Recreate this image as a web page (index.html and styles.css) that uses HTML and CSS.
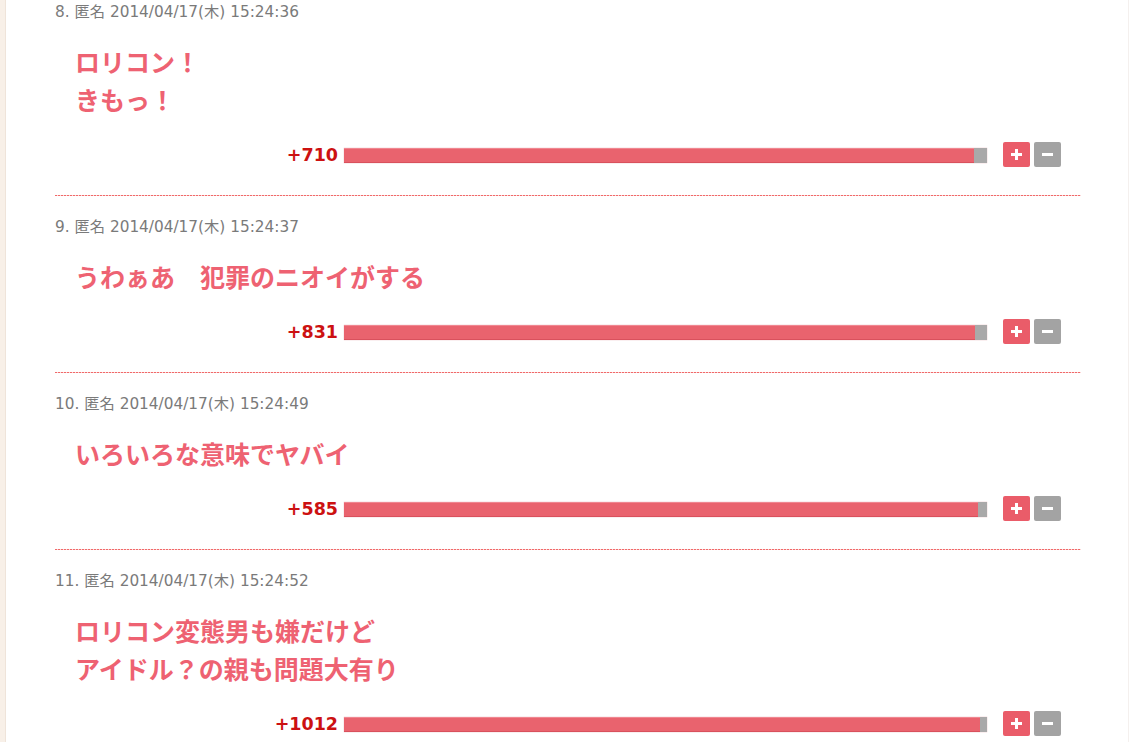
FILE: index.html
```html
<!DOCTYPE html>
<html lang="ja">
<head>
<meta charset="utf-8">
<link rel="stylesheet" href="styles.css">
</head>
<body>
<div class="frame">
  <div class="page">
    <div class="post">
      <div class="meta">8. 匿名 2014/04/17(木) 15:24:36</div>
      <div class="comment">ロリコン！<br>きもっ！</div>
      <div class="vote">
        <span class="score">+710</span>
        <div class="bar"><div class="plus-part" style="width:98%"></div></div>
        <span class="btn btn-plus"></span>
        <span class="btn btn-minus"></span>
      </div>
    </div>
    <div class="post">
      <div class="meta">9. 匿名 2014/04/17(木) 15:24:37</div>
      <div class="comment">うわぁあ　犯罪のニオイがする</div>
      <div class="vote">
        <span class="score">+831</span>
        <div class="bar"><div class="plus-part" style="width:98.1%"></div></div>
        <span class="btn btn-plus"></span>
        <span class="btn btn-minus"></span>
      </div>
    </div>
    <div class="post">
      <div class="meta">10. 匿名 2014/04/17(木) 15:24:49</div>
      <div class="comment">いろいろな意味でヤバイ</div>
      <div class="vote">
        <span class="score">+585</span>
        <div class="bar"><div class="plus-part" style="width:98.6%"></div></div>
        <span class="btn btn-plus"></span>
        <span class="btn btn-minus"></span>
      </div>
    </div>
    <div class="post">
      <div class="meta">11. 匿名 2014/04/17(木) 15:24:52</div>
      <div class="comment">ロリコン変態男も嫌だけど<br>アイドル？の親も問題大有り</div>
      <div class="vote">
        <span class="score">+1012</span>
        <div class="bar"><div class="plus-part" style="width:98.9%"></div></div>
        <span class="btn btn-plus"></span>
        <span class="btn btn-minus"></span>
      </div>
    </div>
  </div>
</div>
</body>
</html>
```

FILE: styles.css
```css
html, body {
  margin: 0;
  padding: 0;
  background: #ffffff;
  font-family: "Noto Sans CJK JP", "DejaVu Sans", sans-serif;
}

.frame {
  border-left: 5px solid #f8f0e8;
  min-height: 742px;
  overflow: hidden;
}

.page {
  border-left: 1px solid #efe4da;
  border-right: 1px solid #f4f0ee;
  margin-right: 1px;
  padding-left: 49px;
  padding-right: 47px;
  min-height: 742px;
}

.post {
  padding-top: 20px;
  padding-bottom: 29px;
  border-bottom: 1px solid transparent;
  background: repeating-linear-gradient(to right, #f06a6a 0px, #f06a6a 2px, #fbd6d6 2px, #fbd6d6 3px) left bottom / 100% 1px no-repeat;
}

.post:first-child {
  padding-top: 2px;
}

.meta {
  font-family: "DejaVu Sans", "Noto Sans CJK JP", sans-serif;
  font-size: 15.3px;
  line-height: 20px;
  color: #7a7a7a;
}

.comment {
  margin-top: 20px;
  padding-left: 20px;
  font-size: 25px;
  line-height: 38px;
  font-weight: bold;
  color: #ee6272;
}

.vote {
  margin-top: 24px;
  display: flex;
  align-items: center;
  height: 25px;
  padding-right: 20px;
}

.score {
  width: 283px;
  text-align: right;
  font-family: "DejaVu Sans", sans-serif;
  font-weight: bold;
  font-size: 17.5px;
  color: #cc1111;
  margin-right: 6px;
}

.bar {
  flex: 1;
  height: 15px;
  background: #a9a9a9;
  display: flex;
  margin-right: 12px;
  margin-top: 2px;
  box-shadow: 0 0 1px rgba(200, 80, 90, 0.5);
}

.plus-part {
  height: 100%;
  background: #e9636e;
  box-shadow: inset 0 1px 0 #f08690, inset 0 -1px 0 #d9515d;
}

.btn {
  position: relative;
  width: 27px;
  height: 25px;
  border-radius: 2px;
  margin-left: 4px;
}

.btn-plus {
  background: #ea5c69;
}

.btn-minus {
  background: #a3a3a3;
}

.btn::before {
  content: "";
  position: absolute;
  left: 8px;
  top: 11px;
  width: 11px;
  height: 3px;
  background: #ffffff;
}

.btn-plus::after {
  content: "";
  position: absolute;
  left: 12px;
  top: 7px;
  width: 3px;
  height: 11px;
  background: #ffffff;
}
```
